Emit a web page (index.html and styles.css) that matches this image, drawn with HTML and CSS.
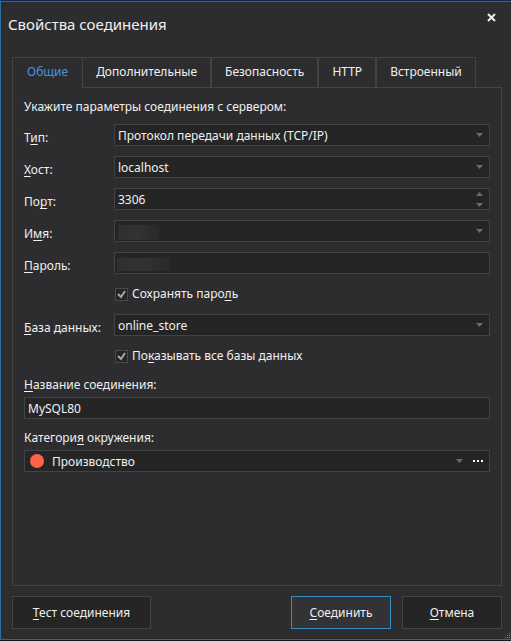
FILE: index.html
```html
<!DOCTYPE html>
<html lang="ru">
<head>
<meta charset="utf-8">
<meta name="viewport" content="width=device-width, initial-scale=1">
<title>Свойства соединения</title>
<link rel="stylesheet" href="styles.css">
</head>
<body>
<form class="dialog">
  <header class="titlebar">
    <h1 class="title">Свойства соединения</h1>
    <button class="close" type="button" aria-label="Закрыть">
      <svg width="9" height="9" viewBox="0 0 9 9" aria-hidden="true"><path d="M1 1l7 7M8 1L1 8" stroke="#f0f0f0" stroke-width="2" fill="none"/></svg>
    </button>
  </header>

  <div class="tabs" role="tablist">
    <button class="tab tab-active" type="button" role="tab" aria-selected="true">Общие</button>
    <button class="tab" type="button" role="tab">Дополнительные</button>
    <button class="tab" type="button" role="tab">Безопасность</button>
    <button class="tab" type="button" role="tab">HTTP</button>
    <button class="tab" type="button" role="tab">Встроенный</button>
  </div>

  <main class="panel" role="tabpanel">
    <p class="intro">Укажите параметры соединения с сервером:</p>

    <div class="fields">
      <label class="label" for="type">Т<u>и</u>п:</label>
      <div class="field">
        <select class="control" id="type"><option>Протокол передачи данных (TCP/IP)</option></select>
        <svg class="arrow" width="7" height="4" viewBox="0 0 7 4" aria-hidden="true"><path d="M0 0h7L3.5 4z"/></svg>
      </div>

      <label class="label" for="host"><u>Х</u>ост:</label>
      <div class="field">
        <select class="control" id="host"><option>localhost</option></select>
        <svg class="arrow" width="7" height="4" viewBox="0 0 7 4" aria-hidden="true"><path d="M0 0h7L3.5 4z"/></svg>
      </div>

      <label class="label" for="port">По<u>р</u>т:</label>
      <div class="field">
        <input class="control" id="port" type="text" inputmode="numeric" value="3306">
        <svg class="arrow" width="7" height="15" viewBox="0 0 7 15" aria-hidden="true"><path d="M0 4h7L3.5 0zM0 11h7L3.5 15z"/></svg>
      </div>

      <label class="label" for="user">И<u>м</u>я:</label>
      <div class="field">
        <select class="control" id="user"><option></option></select>
        <span class="mask mask-user"></span>
        <svg class="arrow" width="7" height="4" viewBox="0 0 7 4" aria-hidden="true"><path d="M0 0h7L3.5 4z"/></svg>
      </div>

      <label class="label" for="password"><u>П</u>ароль:</label>
      <div class="field">
        <input class="control" id="password" type="password">
        <span class="mask mask-password"></span>
      </div>

      <label class="check">
        <input class="box" type="checkbox" checked>
        <span>Сохранять паро<u>л</u>ь</span>
      </label>

      <label class="label" for="database"><u>Б</u>аза данных:</label>
      <div class="field">
        <select class="control" id="database"><option>online_store</option></select>
        <svg class="arrow" width="7" height="4" viewBox="0 0 7 4" aria-hidden="true"><path d="M0 0h7L3.5 4z"/></svg>
      </div>

      <label class="check">
        <input class="box" type="checkbox" checked>
        <span>По<u>к</u>азывать все базы данных</span>
      </label>
    </div>

    <div class="group">
      <label class="caption" for="name"><u>Н</u>азвание соединения:</label>
      <div class="field">
        <input class="control" id="name" type="text" value="MySQL80">
      </div>
    </div>

    <div class="group">
      <label class="caption" for="category">Категори<u>я</u> окружения:</label>
      <div class="field category">
        <span class="dot"></span>
        <select class="control" id="category"><option>Производство</option></select>
        <svg class="arrow" width="7" height="4" viewBox="0 0 7 4" aria-hidden="true"><path d="M0 0h7L3.5 4z"/></svg>
        <button class="more" type="button" aria-label="Ещё">
          <svg width="10" height="2" viewBox="0 0 10 2" aria-hidden="true"><path d="M0 0h2v2H0zM4 0h2v2H4zM8 0h2v2H8z" fill="#fff"/></svg>
        </button>
      </div>
    </div>
  </main>

  <footer class="actions">
    <button class="button button-test" type="button"><u>Т</u>ест соединения</button>
    <button class="button button-primary" type="submit"><u>С</u>оединить</button>
    <button class="button" type="button"><u>О</u>тмена</button>
  </footer>

  <svg class="grip" width="6" height="6" viewBox="0 0 6 6" aria-hidden="true"><path d="M4 0h1v1H4zM2 2h1v1H2zM4 2h1v1H4zM0 4h1v1H0zM2 4h1v1H2zM4 4h1v1H4z" fill="#8a8a8a"/></svg>
</form>
</body>
</html>
```
FILE: styles.css
```css
* {
  box-sizing: border-box;
}

body {
  margin: 0;
  background: #0b1a26;
  color: #f0f0f0;
  font: 12px/16px "Noto Sans", sans-serif;
}

button,
input,
select {
  font: inherit;
  color: inherit;
}

u {
  text-underline-offset: 2px;
  text-decoration-skip-ink: none;
}

.dialog {
  position: relative;
  display: flex;
  flex-direction: column;
  min-height: calc(100vh - 1px);
  padding: 0 9px 10px 11px;
  background: #2d2d2f;
  border-left: 1px solid #27719f;
  border-bottom: 1px solid #2a6a96;
  border-top: 1px solid #0a2a55;
  box-shadow: inset 0 1px #2f6690;
}

.titlebar {
  display: flex;
  justify-content: space-between;
  align-items: flex-start;
  height: 56px;
  padding: 12px 6px 0 0;
  margin-left: -4px;
}

.title {
  margin: 0;
  font-size: 15px;
  line-height: 22px;
  font-weight: normal;
}

.close {
  display: flex;
  padding: 0;
  border: 0;
  background: none;
}

.tabs {
  display: flex;
  margin-bottom: -1px;
}

.tab {
  position: relative;
  height: 31px;
  padding: 0 13px 2px;
  border: 1px solid #434346;
  background: #2d2d2f;
}

.tab-active {
  padding: 0 14px 2px;
  border-right: 0;
  border-bottom-color: #2d2d2f;
  color: #4296e0;
}

.panel {
  flex: 1;
  padding: 11px 11px 0;
  border: 1px solid #434346;
}

.intro {
  margin: 0 0 9px;
}

.fields {
  display: grid;
  grid-template-columns: 90px 1fr;
  row-gap: 10px;
  align-items: center;
}

.label {
  padding-top: 6px;
}

.field {
  position: relative;
  display: flex;
  align-items: center;
  height: 22px;
  background: #252525;
  border: 1px solid #434346;
}

.control {
  flex: 1;
  min-width: 0;
  height: 20px;
  padding: 0 3px;
  border: 0;
  outline: 0;
  background: transparent;
  appearance: none;
}

select.control {
  padding-top: 2px;
}

.arrow {
  position: absolute;
  right: 6px;
  fill: #6c6c6c;
  pointer-events: none;
}

.mask {
  position: absolute;
  background: linear-gradient(90deg, #2f2f2f, #323232 50%, #292929);
}

.mask-user {
  top: 4px;
  left: 3px;
  width: 41px;
  height: 15px;
}

.mask-password {
  top: 5px;
  left: 2px;
  width: 53px;
  height: 13px;
}

.check {
  grid-column: 2;
  display: flex;
  align-items: center;
  gap: 4px;
  height: 20px;
  padding-left: 1px;
}

.box {
  width: 13px;
  height: 13px;
  margin: 0;
  appearance: none;
  border: 1px solid #4a4a4c;
  background: #252525;
}

.box:checked {
  background: #252525 url('data:image/svg+xml,<svg xmlns="http://www.w3.org/2000/svg" viewBox="0 0 11 11"><path d="M2 5l3 3 4-6" fill="none" stroke="%23a8a8a8" stroke-width="2"/></svg>');
}

.group {
  display: flex;
  flex-direction: column;
  gap: 4px;
  margin-top: 11px;
}

.category {
  padding-left: 5px;
}

.category .arrow {
  right: 26px;
}

.dot {
  width: 14px;
  height: 14px;
  margin-right: 5px;
  border-radius: 50%;
  background: #ff6347;
}

.more {
  display: flex;
  align-items: center;
  height: 20px;
  padding: 0 6px;
  border: 0;
  background: none;
}

.actions {
  display: flex;
  gap: 11px;
  padding-top: 10px;
}

.button {
  width: 100px;
  height: 33px;
  padding: 0;
  border: 1px solid #434346;
  background: #252525;
}

.button-test {
  width: 139px;
  margin-right: auto;
}

.button-primary {
  background: #333335;
  border-color: #3a8cc4;
}

.grip {
  position: absolute;
  right: 0;
  bottom: 0;
}
```
